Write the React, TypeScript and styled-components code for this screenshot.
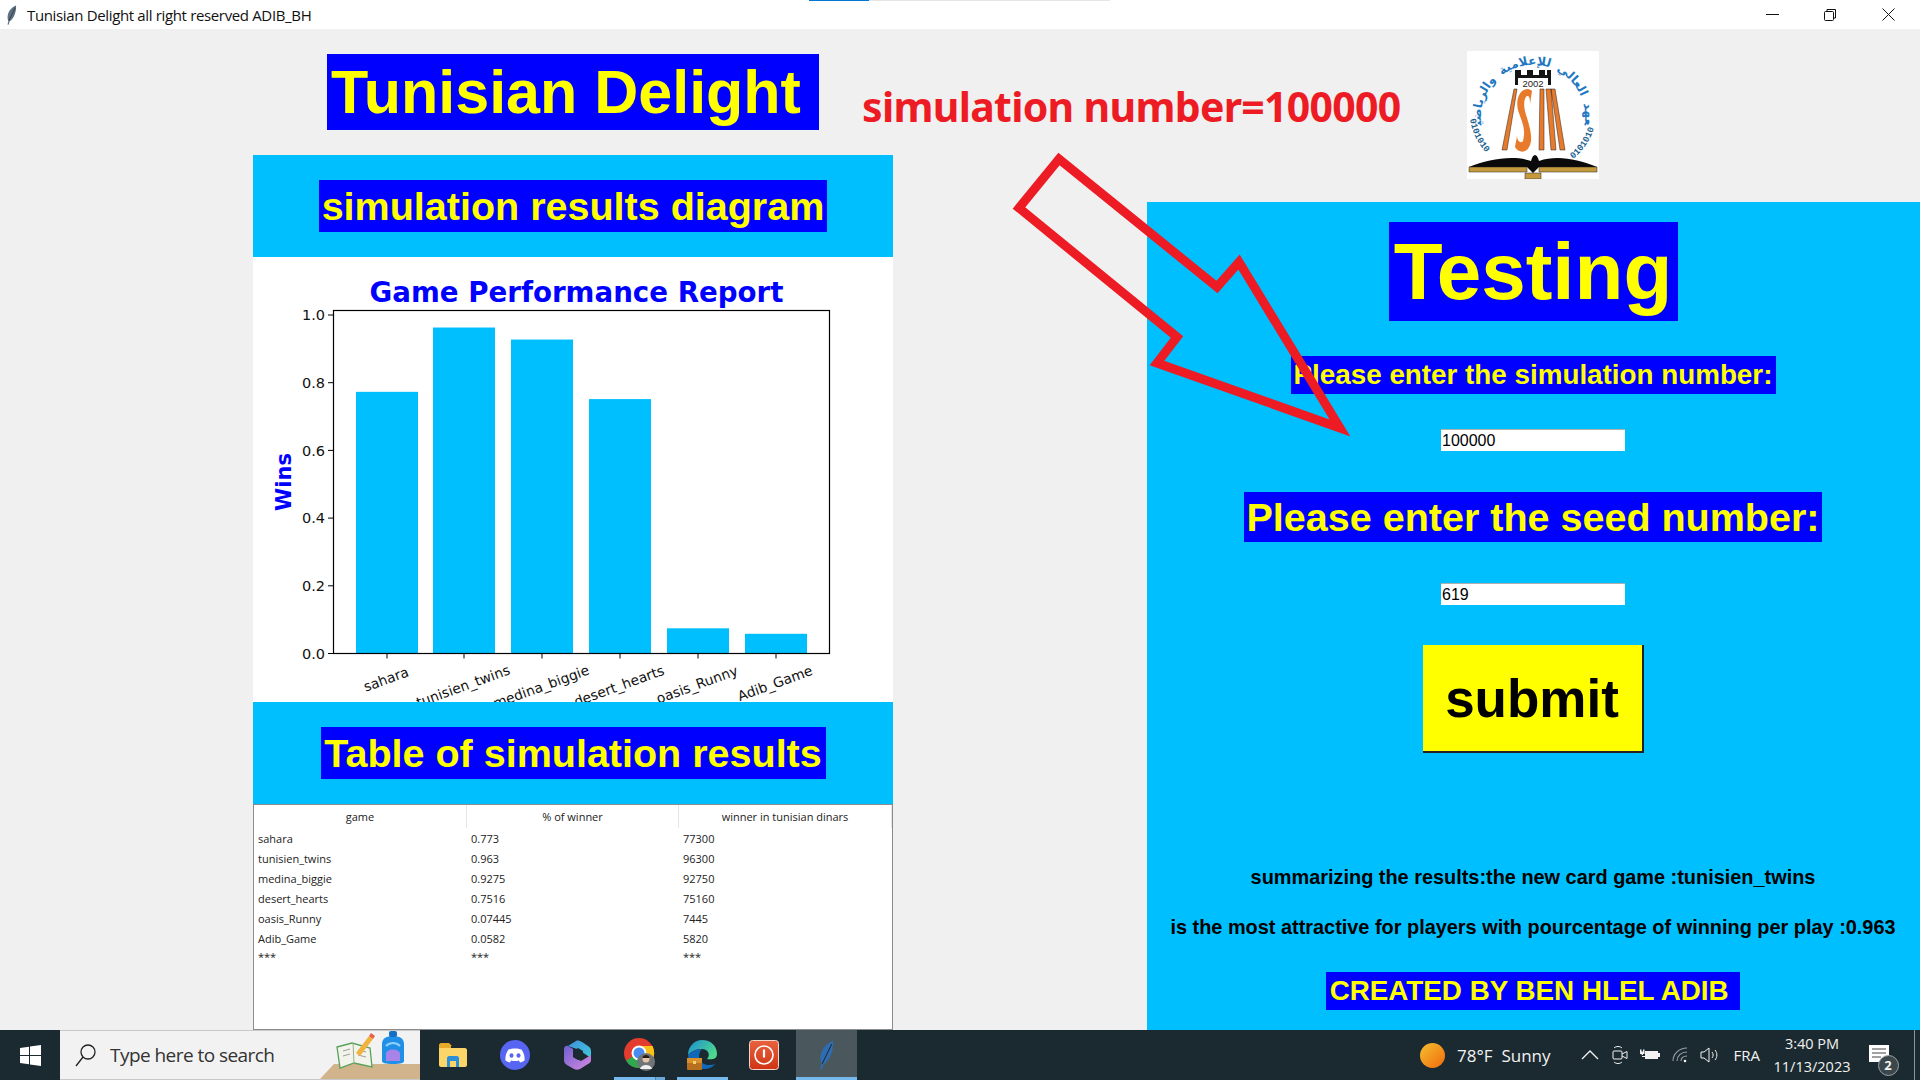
import React from 'react';
import styled, { createGlobalStyle } from 'styled-components';

const GlobalStyle = createGlobalStyle`
  html, body {
    margin: 0;
    padding: 0;
    width: 1920px;
    height: 1080px;
    overflow: hidden;
    background: #f0f0f0;
    font-family: "Liberation Sans", Arial, sans-serif;
  }
  * { box-sizing: border-box; }
`

const Screen = styled.div`
  position: relative;
  display: flex;
  flex-direction: column;
  width: 1920px;
  height: 1080px;
  overflow: hidden;
`
const TitleBar = styled.div`
  position: relative;
  display: flex;
  align-items: center;
  flex: 0 0 29px;
  padding-left: 6px;
  background: #fff;
`
const TitleText = styled.span`
  margin-left: 10px;
  font-family: "Open Sans", sans-serif;
  font-size: 15px;
  letter-spacing: -0.35px;
  color: #111;
`
const ProgressStrip = styled.div`
  position: absolute;
  top: 0;
  left: 809px;
  width: 301px;
  height: 1px;
  background: linear-gradient(90deg, #0078d7 0 60px, #e6e6e6 60px);
`
const WindowButtons = styled.div`
  display: flex;
  margin-left: auto;
  padding-right: 3px;
`
const WindowButton = styled.div`
  display: flex;
  align-items: center;
  justify-content: center;
  width: 58px;
  height: 27px;
`
const Workspace = styled.div`
  display: flex;
  flex: 0 0 1001px;
  padding-left: 253px;
`
const LeftColumn = styled.div`
  display: flex;
  flex-direction: column;
  align-items: stretch;
  flex: 0 0 640px;
  padding-top: 25px;
`
const RightColumn = styled.div`
  display: flex;
  flex-direction: column;
  flex: 0 0 773px;
  margin-left: 254px;
`
const MainTitle = styled.h1`
  align-self: center;
  width: 492px;
  height: 76px;
  margin: 0 0 25px;
  padding-left: 4px;
  background: #0000ff;
  color: #ffff00;
  font-size: 61px;
  line-height: 76px;
  font-weight: 700;
  white-space: pre;
`
const SectionHead = styled.div`
  display: flex;
  align-items: center;
  justify-content: center;
  flex: 0 0 102px;
  background: #00bfff;
`
const Label = styled.div<{ $w: number; $h: number; $size: number; $top?: number }>`
  display: flex;
  align-items: center;
  justify-content: center;
  flex: none;
  width: ${p => p.$w}px;
  height: ${p => p.$h}px;
  margin-top: ${p => p.$top ?? 0}px;
  background: #0000ff;
  color: #ffff00;
  font-size: ${p => p.$size}px;
  font-weight: 700;
  white-space: pre;
`
const ChartBox = styled.div`
  flex: 0 0 445px;
  height: 445px;
  background: #fff;
  overflow: hidden;
`
const ResultsTable = styled.div`
  flex: 1;
  display: flex;
  flex-direction: column;
  background: #fff;
  border: 1px solid #8c8c8c;
  font-family: "Open Sans", sans-serif;
  font-size: 11px;
  color: #222;
`
const TableHead = styled.div`
  display: grid;
  grid-template-columns: 213px 212px 213px;
  flex: 0 0 23px;
`
const HeadCell = styled.div`
  display: flex;
  align-items: center;
  justify-content: center;
  border-right: 1px solid #e5e5e5;
`
const TableRow = styled.div<{ $h?: number }>`
  display: grid;
  grid-template-columns: 213px 212px 213px;
  align-items: center;
  height: ${p => p.$h ?? 20}px;
`
const Cell = styled.div`
  padding-left: 4px;
`
const LogoRow = styled.div`
  display: flex;
  justify-content: center;
  flex: 0 0 173px;
  padding: 22px 1px 0 0;
`
const TestingPanel = styled.div`
  flex: 1;
  display: flex;
  flex-direction: column;
  align-items: center;
  padding: 20px 1px 0 0;
  background: #00bfff;
`
const ValueInput = styled.input<{ $top: number }>`
  display: block;
  flex: none;
  width: 184px;
  height: 22px;
  margin-top: ${p => p.$top}px;
  padding: 0 1px;
  border: 0;
  border-top: 1px solid #b0b0b0;
  background: #fff;
  font-family: "Liberation Sans", sans-serif;
  font-size: 16px;
  color: #000;
`
const SubmitButton = styled.button`
  flex: none;
  width: 221px;
  height: 108px;
  margin-top: 40px;
  padding: 0;
  background: #ffff00;
  border: 0;
  border-right: 2px solid #222;
  border-bottom: 2px solid #222;
  font-family: "Liberation Sans", sans-serif;
  font-size: 53px;
  font-weight: 700;
  color: #000;
`
const Summary = styled.p<{ $top: number }>`
  flex: none;
  margin: ${p => p.$top}px 0 0;
  font-size: 19.9px;
  line-height: 24px;
  font-weight: 700;
  color: #000;
  white-space: pre;
`
const Annotation = styled.div`
  position: absolute;
  top: 77px;
  left: 862px;
  font-family: "Noto Sans", sans-serif;
  font-size: 41px;
  line-height: 58px;
  font-weight: 700;
  color: #ed1c24;
  letter-spacing: -0.7px;
  white-space: pre;
`
const ArrowLayer = styled.svg`
  position: absolute;
  top: 0;
  left: 0;
  pointer-events: none;
`
const Taskbar = styled.div`
  display: flex;
  align-items: stretch;
  flex: 0 0 50px;
  background: #1b2a30;
  color: #fff;
`
const StartButton = styled.div`
  display: flex;
  align-items: center;
  justify-content: center;
  flex: 0 0 60px;
`
const SearchBox = styled.div`
  display: flex;
  align-items: center;
  flex: 0 0 360px;
  padding-left: 15px;
  background: #f2f2f2;
  border: 1px solid #c8c8c8;
  border-width: 1px 0;
  color: #333;
  font-family: "Open Sans", sans-serif;
  font-size: 19px;
  letter-spacing: -0.55px;
`
const SearchText = styled.span`
  margin-left: 13px;
`
const SearchArt = styled.svg`
  margin-left: auto;
`
const TaskIcons = styled.div`
  display: flex;
  gap: 11.3px;
  padding-left: 7.5px;
`
const TaskIcon = styled.div<{ $active?: boolean; $open?: boolean; $stacked?: boolean }>`
  display: flex;
  align-items: center;
  justify-content: center;
  width: ${p => (p.$active ? 61 : 51)}px;
  margin-left: ${p => (p.$active ? -5.5 : 0)}px;
  padding-top: 3px;
  background: ${p => (p.$active ? '#4a585d' : 'transparent')};
  border-bottom: 3px solid ${p => (p.$active || p.$open ? '#76b9ed' : 'transparent')};
  ${p => p.$stacked && 'border-image: linear-gradient(90deg, #76b9ed 0 40px, #4c86b0 40px 41px, #6aa8d8 41px) 1;'}
`
const Tray = styled.div`
  display: flex;
  align-items: center;
  margin-left: auto;
  font-family: "Open Sans", sans-serif;
  font-size: 17px;
  color: #f2f2f2;
`
const Weather = styled.span`
  margin: 0 24px 0 12px;
  white-space: pre;
`
const TrayIcon = styled.div`
  display: flex;
  align-items: center;
  justify-content: center;
  width: 30px;
`
const Lang = styled.span`
  margin: 0 0 0 9px;
  font-size: 15px;
`
const Clock = styled.div`
  width: 104px;
  text-align: center;
  font-size: 14.5px;
  line-height: 23px;
`
const Notify = styled.div`
  position: relative;
  display: flex;
  align-items: center;
  width: 51px;
  height: 50px;
  margin-right: 5px;
  padding: 0 0 3px 5px;
  border-right: 1px solid #8a9599;
`
const NotifyBadge = styled.span`
  position: absolute;
  left: 13.5px;
  top: 24.5px;
  width: 21px;
  height: 21px;
  border-radius: 50%;
  background: #3c474b;
  border: 1px solid #9aa3a6;
  font-size: 13px;
  font-weight: 700;
  line-height: 19px;
  text-align: center;
`

const games = [
  { name: 'sahara', pct: '0.773', dinars: '77300', value: 0.773, labelW: 47 },
  { name: 'tunisien_twins', pct: '0.963', dinars: '96300', value: 0.963, labelW: 100 },
  { name: 'medina_biggie', pct: '0.9275', dinars: '92750', value: 0.9275, labelW: 104 },
  { name: 'desert_hearts', pct: '0.7516', dinars: '75160', value: 0.7516, labelW: 98 },
  { name: 'oasis_Runny', pct: '0.07445', dinars: '7445', value: 0.07445, labelW: 88 },
  { name: 'Adib_Game', pct: '0.0582', dinars: '5820', value: 0.0582, labelW: 78 },
]

const Feather = ({ h = 20, color = '#5f6f80' }: { h?: number; color?: string }) => (
  <svg width={h * 0.55} height={h} viewBox="0 0 12 22">
    <path d="M11 0.500C6 2.500 2 7 1.700 13C1.600 15 2 16.500 2.600 17.500L1.600 21.500L2.800 21.700L4 18C8.500 15 11.500 8 11 0.500Z" fill={color} />
    <path d="M10 3L3 17.500" stroke="#17232a" strokeWidth={0.7} fill="none" />
  </svg>
)

// matplotlib figure, coordinates are relative to the white chart box
const Chart = () => {
  const y0 = 396.5
  const scale = 338.5
  const barX = [103, 180, 258, 336, 414, 492]
  const ticks = [0, 0.2, 0.4, 0.6, 0.8, 1]
  return (
    <svg width={640} height={445} viewBox="0 0 640 445">
      <text x={323.5} y={45} textAnchor="middle" fontFamily="DejaVu Sans" fontWeight={700} fontSize={27.7} fill="#0000ff">Game Performance Report</text>
      <text transform="translate(37.5 225) rotate(-90)" textAnchor="middle" fontFamily="DejaVu Sans" fontWeight={700} fontSize={21} fill="#0000ff">Wins</text>
      {games.map((g, i) => (
        <g key={g.name}>
          <rect x={barX[i]} y={y0 - g.value * scale} width={62} height={g.value * scale} fill="#00bfff" />
          <line x1={barX[i] + 31} x2={barX[i] + 31} y1={y0} y2={y0 + 5} stroke="#000" strokeWidth={1} />
          <text
            transform={`translate(${barX[i] + 30} ${416 + g.labelW * 0.13}) rotate(-20)`}
            textAnchor="middle"
            dominantBaseline="central"
            fontFamily="DejaVu Sans"
            fontSize={13.8}
            fill="#111"
          >
            {g.name}
          </text>
        </g>
      ))}
      {ticks.map(t => (
        <g key={t}>
          <line x1={75} x2={80.5} y1={y0 - t * scale} y2={y0 - t * scale} stroke="#000" strokeWidth={1} />
          <text x={72} y={y0 - t * scale + 5.2} textAnchor="end" fontFamily="DejaVu Sans" fontSize={14.5} fill="#111">{t.toFixed(1)}</text>
        </g>
      ))}
      <rect x={80.5} y={53.5} width={496} height={343} fill="none" stroke="#000" strokeWidth={1.2} />
    </svg>
  )
}

const Logo = () => (
  <svg width={132} height={128} viewBox="0 0 132 128">
    <rect width={132} height={128} fill="#fff" />
    <defs>
      <path id="arabic-arc" d="M15 76A52 52 0 1 1 117 76" />
      <path id="digits-left" d="M3 68A63 63 0 0 0 26 108" />
      <path id="digits-right" d="M106 108A63 63 0 0 0 129 68" />
    </defs>
    <text fontFamily="DejaVu Sans" fontWeight={700} fontSize={12} wordSpacing={3} fill="#1f78c1">
      <textPath href="#arabic-arc" startOffset="50%" textAnchor="middle">المعهد العالي للإعلامية والرياضيات</textPath>
    </text>
    <text fontFamily="Liberation Mono" fontWeight={700} fontSize={9} fill="#1b5f90">
      <textPath href="#digits-left">0101010</textPath>
    </text>
    <text fontFamily="Liberation Mono" fontWeight={700} fontSize={9} fill="#1b5f90">
      <textPath href="#digits-right">0101010</textPath>
    </text>
    <path d="M48 34V19H54V24H60V19H66V24H72V19H78V24H80V19H84V34H81V27H51V34Z" fill="#151515" />
    <text x={66} y={36} textAnchor="middle" fontFamily="Liberation Sans" fontSize={9.5} fill="#222">2002</text>
    <path d="M35 99L47 38H50L40 99Z" fill="#e87a2b" stroke="#222" strokeWidth={0.5} />
    <path d="M61 38C51 38 48 52 52 62C55 71 59 78 56 90C54 93 50 90 50 85L48 96C52 103 62 103 64 90C65 80 60 68 58 60C56 52 58 44 61 45C63 46 63 50 63 53L65 40C64 39 62 38 61 38Z" fill="#e87a2b" />
    <path d="M73 38H77L77 99H72Z" fill="#e87a2b" stroke="#222" strokeWidth={0.5} />
    <path d="M79 38H84L89 99H84Z M84 38H88L98 99H93Z" fill="#e87a2b" stroke="#222" strokeWidth={0.5} />
    <path d="M2 116C22 108 46 104 64 110C66 102 70 102 72 110C90 104 110 108 130 116H72L66 122L60 116Z" fill="#0a0a0a" />
    <path d="M2 116H60V121H2Z M72 116H130V121H72Z" fill="#c49a3c" stroke="#222" strokeWidth={0.5} />
    <rect x={58} y={122} width={16} height={6} fill="#c49a3c" stroke="#222" strokeWidth={0.5} />
  </svg>
)

const Arrow = () => (
  <ArrowLayer width={1920} height={1080} viewBox="0 0 1920 1080">
    <polygon
      points="1059,159 1217,287 1239,262 1340,428 1157,363 1177,337 1019,208"
      fill="none"
      stroke="#ed1c24"
      strokeWidth={9}
      strokeMiterlimit={8}
    />
  </ArrowLayer>
)

const TaskbarIcons = () => (
  <TaskIcons>
    <TaskIcon>
      <svg width={28} height={24} viewBox="0 0 28 24">
        <path d="M0 2C0 1 1 0 2 0H10L13 3H12V7H0Z" fill="#e6a92a" />
        <path d="M0 5H26C27 5 28 6 28 7V22C28 23 27 24 26 24H2C1 24 0 23 0 22Z" fill="#fbd568" />
        <path d="M8 24V15C8 14 9 13 10 13H18C19 13 20 14 20 15V24H17V18H11V24Z" fill="#2a8fd8" />
      </svg>
    </TaskIcon>
    <TaskIcon>
      <svg width={30} height={30} viewBox="0 0 30 30">
        <circle cx={15} cy={15} r={15} fill="#5865f2" />
        <path d="M8.500 9.500C12 8 18 8 21.500 9.500C24 13 25 17 24.500 20.500C23 21.700 21.500 22.300 20 22.500L19 20.500C16.500 21.300 13.500 21.300 11 20.500L10 22.500C8.500 22.300 7 21.700 5.500 20.500C5 17 6 13 8.500 9.500Z" fill="#fff" />
        <ellipse cx={11.500} cy={15.500} rx={2} ry={2.300} fill="#5865f2" />
        <ellipse cx={18.500} cy={15.500} rx={2} ry={2.300} fill="#5865f2" />
      </svg>
    </TaskIcon>
    <TaskIcon>
      <svg width={27} height={30} viewBox="0 0 27 30">
        <defs>
          <linearGradient id="copilot-top" x1="0" y1="0" x2="1" y2="1">
            <stop offset="0" stopColor="#3f8fe0" />
            <stop offset="1" stopColor="#41c9d8" />
          </linearGradient>
          <linearGradient id="copilot-low" x1="0" y1="0" x2="1" y2="1">
            <stop offset="0" stopColor="#6f5fd0" />
            <stop offset="1" stopColor="#d58ae0" />
          </linearGradient>
        </defs>
        <path d="M4 6L12 1C14 0 16 1 18 2L24 6C26 7 27 9 27 11V18L18 12L13 9Z" fill="url(#copilot-top)" />
        <path d="M0 9C0 7 2 5 4 6L9 9V17L17 21L27 15V20C27 22 26 23 24 24L16 29C14 30 12 30 10 29L3 25C1 24 0 22 0 20Z" fill="url(#copilot-low)" />
        <path d="M9 11L14 8L19 11V17L14 20L9 17Z" fill="#1b2a30" />
      </svg>
    </TaskIcon>
    <TaskIcon $open $stacked>
      <svg width={32} height={34} viewBox="0 0 32 34">
        <circle cx={15} cy={15} r={15} fill="#e33b2e" />
        <path d="M15 15L2 22.500A15 15 0 0 0 15 30L22 20Z" fill="#2da94f" />
        <path d="M15 15L28.500 8A15 15 0 0 1 15 30L22 20Z" fill="#fbc116" />
        <path d="M15 8H28.500L30 15H15Z" fill="#fbc116" />
        <circle cx={15} cy={15} r={6.500} fill="#4a8cf0" stroke="#fff" strokeWidth={2} />
        <circle cx={22} cy={24} r={9} fill="#6f7476" />
        <circle cx={22} cy={21} r={3.500} fill="#e6c2a6" />
        <path d="M18.500 20C18 16 26 16 25.500 20Z" fill="#2a1d18" />
        <path d="M16 31C17 25.500 27 25.500 28 31Z" fill="#f0f0f0" />
      </svg>
    </TaskIcon>
    <TaskIcon $open>
      <svg width={30} height={30} viewBox="0 0 30 30">
        <defs>
          <linearGradient id="edge-top" x1="0" y1="0" x2="1" y2="0.600">
            <stop offset="0" stopColor="#1b8fd6" />
            <stop offset="1" stopColor="#4fd88c" />
          </linearGradient>
        </defs>
        <path d="M1 15C1 6 8 0 15 0C24 0 30 6 30 14C30 19 25 20 20 19C24 15 21 9 15 9C8 9 4 12 1 15Z" fill="url(#edge-top)" />
        <path d="M1 15C1 24 8 29 16 29C22 29 26 27 28 24C22 26 15 25 13 20C11 15 13 11 15 9C9 9 4 12 1 15Z" fill="#1268b8" />
        <rect x={0} y={18} width={15} height={12} rx={1} fill="#b7701f" />
        <rect x={0} y={18} width={15} height={5} fill="#d88f2c" />
        <rect x={6} y={21} width={3} height={3} fill="#f4d070" />
      </svg>
    </TaskIcon>
    <TaskIcon>
      <svg width={30} height={30} viewBox="0 0 30 30">
        <defs>
          <linearGradient id="red-app" x1="0" y1="0" x2="0" y2="1">
            <stop offset="0" stopColor="#e9623f" />
            <stop offset="1" stopColor="#cf3413" />
          </linearGradient>
        </defs>
        <rect x={0.500} y={0.500} width={29} height={29} rx={3} fill="url(#red-app)" stroke="#f3d6cc" />
        <circle cx={15} cy={15} r={9} fill="none" stroke="#fff" strokeWidth={1.600} />
        <line x1={15} y1={9.500} x2={15} y2={17.500} stroke="#fff" strokeWidth={2.200} />
      </svg>
    </TaskIcon>
    <TaskIcon $active>
      <Feather h={30} color="#2f6db3" />
    </TaskIcon>
  </TaskIcons>
)

const TrayIcons = () => (
  <>
    <TrayIcon>
      <svg width={18} height={10} viewBox="0 0 18 10"><path d="M1 9L9 1L17 9" fill="none" stroke="#f2f2f2" strokeWidth={1.300} /></svg>
    </TrayIcon>
    <TrayIcon>
      <svg width={16} height={20} viewBox="0 0 16 20" fill="none" stroke="#f2f2f2" strokeWidth={1}>
        <rect x={1} y={6} width={9} height={8} rx={1} />
        <path d="M10 9L15 6.500V13.500L10 11" />
        <path d="M2 3C4 1 8 1 10 3M2 17C4 19 8 19 10 17" />
      </svg>
    </TrayIcon>
    <TrayIcon>
      <svg width={20} height={12} viewBox="0 0 20 12">
        <path d="M0 0.500H1.500V2.500H3V0.500H4.500V5H3V6H1.500V5H0Z" fill="#f2f2f2" />
        <path d="M5 2H18V4H20V8H18V10H5V8H2V7H5Z" fill="#f2f2f2" />
      </svg>
    </TrayIcon>
    <TrayIcon>
      <svg width={16} height={16} viewBox="0 0 16 16" fill="none" stroke="#9aa3a6" strokeWidth={1.100}>
        <path d="M1 14C1 7 7 1 15 1M5 14C5 9 9 5 15 5M9 14C9 11 11 9 15 9" />
        <circle cx={13} cy={14} r={1.300} fill="#f2f2f2" stroke="none" />
      </svg>
    </TrayIcon>
    <TrayIcon>
      <svg width={20} height={16} viewBox="0 0 20 16" fill="none" stroke="#f2f2f2" strokeWidth={1}>
        <path d="M1 5H4L9 1V15L4 11H1Z" />
        <path d="M12 5C13.500 7 13.500 9 12 11M15 3C17.500 6 17.500 10 15 13" />
      </svg>
    </TrayIcon>
  </>
)

export default function App() {
  return (
    <Screen>
      <GlobalStyle />
      <TitleBar>
        <Feather />
        <TitleText>Tunisian Delight all right reserved ADIB_BH</TitleText>
        <ProgressStrip />
        <WindowButtons>
          <WindowButton>
            <svg width={13} height={3} viewBox="0 0 13 3"><line x1={0} y1={1.500} x2={13} y2={1.500} stroke="#111" /></svg>
          </WindowButton>
          <WindowButton>
            <svg width={12} height={12} viewBox="0 0 12 12" fill="none" stroke="#111">
              <rect x={0.500} y={2.500} width={9} height={9} rx={1} />
              <path d="M3 2.500V0.500H11.500V9H9.500" />
            </svg>
          </WindowButton>
          <WindowButton>
            <svg width={13} height={13} viewBox="0 0 13 13" stroke="#111"><path d="M0.500 0.500L12.500 12.500M12.500 0.500L0.500 12.500" /></svg>
          </WindowButton>
        </WindowButtons>
      </TitleBar>

      <Workspace>
        <LeftColumn>
          <MainTitle>Tunisian Delight</MainTitle>
          <SectionHead>
            <Label $w={508} $h={52} $size={39.5}>simulation results diagram</Label>
          </SectionHead>
          <ChartBox><Chart /></ChartBox>
          <SectionHead>
            <Label $w={505} $h={52} $size={39.5}>Table of simulation results</Label>
          </SectionHead>
          <ResultsTable>
            <TableHead>
              <HeadCell>game</HeadCell>
              <HeadCell>% of winner</HeadCell>
              <HeadCell>winner in tunisian dinars</HeadCell>
            </TableHead>
            {games.map(g => (
              <TableRow key={g.name}>
                <Cell>{g.name}</Cell>
                <Cell>{g.pct}</Cell>
                <Cell>{g.dinars}</Cell>
              </TableRow>
            ))}
            <TableRow $h={16}>
              <Cell>***</Cell>
              <Cell>***</Cell>
              <Cell>***</Cell>
            </TableRow>
          </ResultsTable>
        </LeftColumn>

        <RightColumn>
          <LogoRow><Logo /></LogoRow>
          <TestingPanel>
            <Label $w={289} $h={99} $size={80}>Testing</Label>
            <Label $w={485} $h={38} $size={27.8} $top={35}>Please enter the simulation number:</Label>
            <ValueInput $top={35} defaultValue="100000" readOnly />
            <Label $w={578} $h={50} $size={39.5} $top={41}>Please enter the seed number:</Label>
            <ValueInput $top={41} defaultValue="619" readOnly />
            <SubmitButton>submit</SubmitButton>
            <Summary $top={112}>summarizing the results:the new card game :tunisien_twins</Summary>
            <Summary $top={26}>is the most attractive for players with pourcentage of winning per play :0.963</Summary>
            <Label $w={414} $h={38} $size={27.8} $top={33}>CREATED BY BEN HLEL ADIB </Label>
          </TestingPanel>
        </RightColumn>
      </Workspace>

      <Taskbar>
        <StartButton>
          <svg width={21} height={21} viewBox="0 0 21 21" fill="#fff">
            <path d="M0 3L9 1.700V10H0Z M10 1.500L21 0V10H10Z M0 11H9V19.300L0 18Z M10 11H21V21L10 19.500Z" />
          </svg>
        </StartButton>
        <SearchBox>
          <svg width={22} height={24} viewBox="0 0 22 24" fill="none" stroke="#222" strokeWidth={1.300}>
            <circle cx={13} cy={9} r={7} />
            <line x1={8} y1={14} x2={1} y2={23} />
          </svg>
          <SearchText>Type here to search</SearchText>
          <SearchArt width={100} height={48} viewBox="0 0 100 48">
            <path d="M0 48L14 33H100V48Z" fill="#d2b48c" />
            <path d="M17 16L32 12L50 17L52 36L34 32L20 37Z" fill="#f2f4ec" stroke="#5aa05a" strokeWidth={1.300} />
            <path d="M33 12L34 32" stroke="#9ab08a" />
            <path d="M23 20L30 18M23 25L30 23M38 19L46 21M38 24L46 26" stroke="#888" strokeWidth={0.800} />
            <path d="M36 22L49 5L53 8L40 25Z" fill="#f2b33d" />
            <path d="M49 5L51 2L55 5L53 8Z" fill="#e8604c" />
            <path d="M62 30V13C62 7 67 5 73 5C79 5 84 7 84 13V30C84 32 81 33 73 33C65 33 62 32 62 30Z" fill="#1f8fe8" />
            <rect x={69} y={0} width={8} height={6} rx={2} fill="#1570c4" />
            <path d="M66 30V23C66 17 80 17 80 23V30Z" fill="#a884e8" />
            <path d="M66 15C70 11 76 11 80 15" stroke="#8ed0ff" strokeWidth={2} fill="none" />
          </SearchArt>
        </SearchBox>
        <TaskbarIcons />
        <Tray>
          <svg width={25} height={25} viewBox="0 0 25 25">
            <defs>
              <linearGradient id="sun" x1="0" y1="0" x2="1" y2="1">
                <stop offset="0" stopColor="#f5c030" />
                <stop offset="1" stopColor="#f06a0c" />
              </linearGradient>
            </defs>
            <circle cx={12.500} cy={12.500} r={12.500} fill="url(#sun)" />
          </svg>
          <Weather>78°F  Sunny</Weather>
          <TrayIcons />
          <Lang>FRA</Lang>
          <Clock>3:40 PM<br />11/13/2023</Clock>
          <Notify>
            <svg width={20} height={17} viewBox="0 0 20 17">
              <path d="M0 0H20V17H0Z" fill="#fff" />
              <path d="M3 4H17M3 8H17M3 12H12" stroke="#444" strokeWidth={1} />
            </svg>
            <NotifyBadge>2</NotifyBadge>
          </Notify>
        </Tray>
      </Taskbar>

      <Annotation>simulation number=100000</Annotation>
      <Arrow />
    </Screen>
  )
}
